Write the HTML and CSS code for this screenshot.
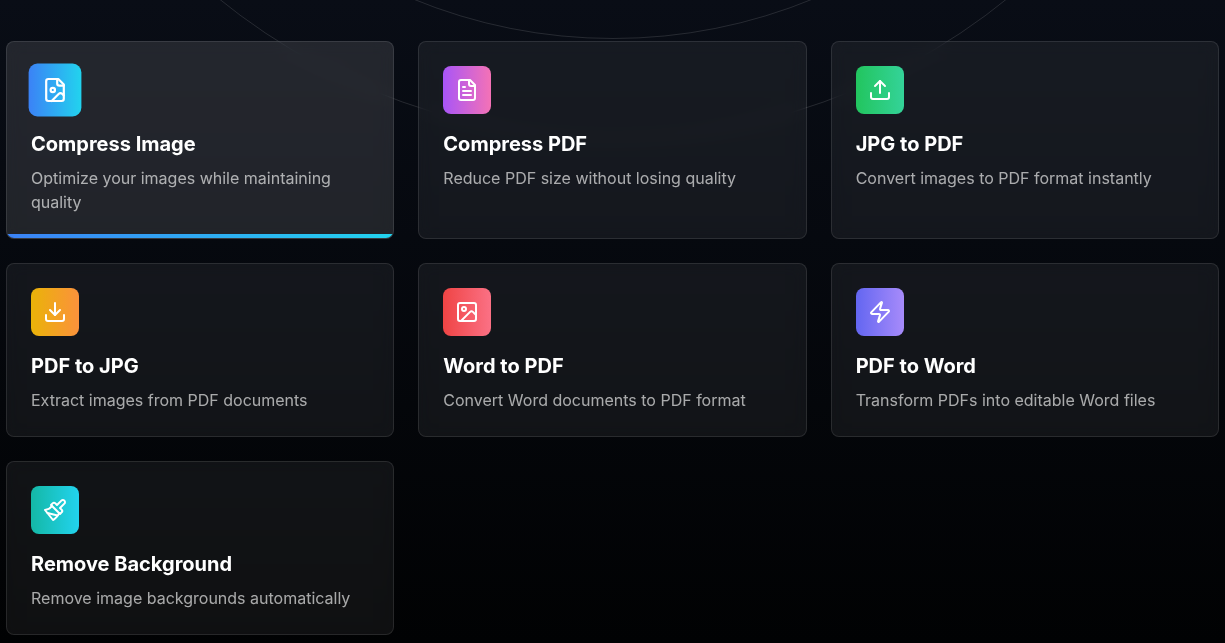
FILE: index.html
```html
<!DOCTYPE html>
<html lang="en">
<head>
<meta charset="utf-8">
<meta name="viewport" content="width=device-width, initial-scale=1">
<title>Image and PDF tools</title>
<link rel="stylesheet" href="styles.css">
</head>
<body>
<div class="rings" aria-hidden="true">
  <div class="ring ring-inner"></div>
  <div class="ring ring-outer"></div>
</div>
<main class="tools">
  <a class="card card-active" href="#compress-image">
    <span class="icon blue"><svg viewBox="0 0 24 24"><path d="M15 2H6a2 2 0 0 0-2 2v16a2 2 0 0 0 2 2h12a2 2 0 0 0 2-2V7Z"/><path d="M14 2v4a2 2 0 0 0 2 2h4"/><circle cx="10" cy="12" r="2"/><path d="m20 17-1.296-1.296a2.41 2.41 0 0 0-3.408 0L9 22"/></svg></span>
    <h2 class="title">Compress Image</h2>
    <p class="text">Optimize your images while maintaining quality</p>
    <span class="bar blue"></span>
  </a>
  <a class="card" href="#compress-pdf">
    <span class="icon purple"><svg viewBox="0 0 24 24"><path d="M15 2H6a2 2 0 0 0-2 2v16a2 2 0 0 0 2 2h12a2 2 0 0 0 2-2V7Z"/><path d="M14 2v4a2 2 0 0 0 2 2h4"/><path d="M10 9H8"/><path d="M16 13H8"/><path d="M16 17H8"/></svg></span>
    <h2 class="title">Compress PDF</h2>
    <p class="text">Reduce PDF size without losing quality</p>
  </a>
  <a class="card" href="#jpg-to-pdf">
    <span class="icon green"><svg viewBox="0 0 24 24"><path d="M21 15v4a2 2 0 0 1-2 2H5a2 2 0 0 1-2-2v-4"/><path d="m17 8-5-5-5 5"/><path d="M12 3v12"/></svg></span>
    <h2 class="title">JPG to PDF</h2>
    <p class="text">Convert images to PDF format instantly</p>
  </a>
  <a class="card" href="#pdf-to-jpg">
    <span class="icon amber"><svg viewBox="0 0 24 24"><path d="M21 15v4a2 2 0 0 1-2 2H5a2 2 0 0 1-2-2v-4"/><path d="m7 10 5 5 5-5"/><path d="M12 15V3"/></svg></span>
    <h2 class="title">PDF to JPG</h2>
    <p class="text">Extract images from PDF documents</p>
  </a>
  <a class="card" href="#word-to-pdf">
    <span class="icon red"><svg viewBox="0 0 24 24"><rect x="3" y="3" width="18" height="18" rx="2"/><circle cx="9" cy="9" r="2"/><path d="m21 15-3.086-3.086a2 2 0 0 0-2.828 0L6 21"/></svg></span>
    <h2 class="title">Word to PDF</h2>
    <p class="text">Convert Word documents to PDF format</p>
  </a>
  <a class="card" href="#pdf-to-word">
    <span class="icon indigo"><svg viewBox="0 0 24 24"><path d="M4 14a1 1 0 0 1-.78-1.63l9.9-10.2a.5.5 0 0 1 .86.46l-1.92 6.02A1 1 0 0 0 13 10h7a1 1 0 0 1 .78 1.63l-9.9 10.2a.5.5 0 0 1-.86-.46l1.92-6.02A1 1 0 0 0 11 14z"/></svg></span>
    <h2 class="title">PDF to Word</h2>
    <p class="text">Transform PDFs into editable Word files</p>
  </a>
  <a class="card" href="#remove-background">
    <span class="icon teal"><svg viewBox="0 0 24 24"><path d="M18.37 2.63 14 7l-1.59-1.59a2 2 0 0 0-2.82 0L8 7l9 9 1.59-1.59a2 2 0 0 0 0-2.82L17 10l4.37-4.37a2.12 2.12 0 1 0-3-3Z"/><path d="M9 8c-2 3-4 3.5-7 4l8 10c2-1 6-5 6-7"/><path d="M14.5 17.5 4.5 15"/></svg></span>
    <h2 class="title">Remove Background</h2>
    <p class="text">Remove image backgrounds automatically</p>
  </a>
</main>
</body>
</html>
```
FILE: styles.css
```css
* {
  box-sizing: border-box;
}

body {
  margin: 0;
  min-height: 100vh;
  position: relative;
  background: linear-gradient(to bottom, #090d16, #010203);
  color: #ffffff;
  font-family: Inter, "Liberation Sans", sans-serif;
}

.rings {
  position: absolute;
  inset: 0;
  overflow: hidden;
}

.ring {
  position: absolute;
  left: 50%;
  top: -487px;
  transform: translate(-50%, -50%);
  border: 1px solid rgba(255, 255, 255, 0.12);
  border-radius: 50%;
}

.ring-inner {
  width: 1052px;
  height: 1052px;
}

.ring-outer {
  width: 1252px;
  height: 1252px;
}

.tools {
  position: relative;
  display: grid;
  grid-template-columns: repeat(auto-fit, minmax(320px, 1fr));
  gap: 24px;
  padding: 41px 6px 8px;
}

.card {
  position: relative;
  overflow: hidden;
  padding: 24px;
  border: 1px solid rgba(255, 255, 255, 0.1);
  border-radius: 8px;
  background: rgba(255, 255, 255, 0.06);
  backdrop-filter: blur(8px);
  color: inherit;
  text-decoration: none;
}

.card-active {
  background: rgba(255, 255, 255, 0.11);
}

.icon {
  display: flex;
  align-items: center;
  justify-content: center;
  width: 48px;
  height: 48px;
  margin-bottom: 16px;
  border-radius: 8px;
}

.card-active .icon {
  transform: scale(1.1);
}

.icon svg {
  width: 24px;
  height: 24px;
  fill: none;
  stroke: #ffffff;
  stroke-width: 2;
  stroke-linecap: round;
  stroke-linejoin: round;
}

.title {
  margin: 0 0 8px;
  font-size: 20px;
  line-height: 28px;
  font-weight: 700;
}

.text {
  margin: 0;
  font-size: 16px;
  line-height: 24px;
  color: rgba(255, 255, 255, 0.64);
}

.bar {
  position: absolute;
  left: 0;
  right: 0;
  bottom: 0;
  height: 4px;
}

.blue { background: linear-gradient(to right, #3b82f6, #22d3ee); }
.purple { background: linear-gradient(to right, #a855f7, #f472b6); }
.green { background: linear-gradient(to right, #22c55e, #34d399); }
.amber { background: linear-gradient(to right, #eab308, #fb923c); }
.red { background: linear-gradient(to right, #ef4444, #fb7185); }
.indigo { background: linear-gradient(to right, #6366f1, #a78bfa); }
.teal { background: linear-gradient(to right, #14b8a6, #22d3ee); }
```
